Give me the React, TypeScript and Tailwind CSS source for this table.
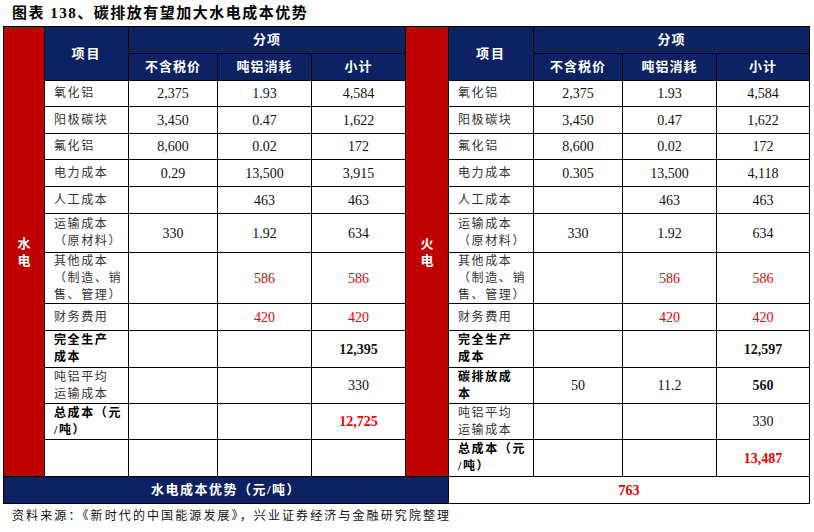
const NAVY = "bg-[#0c2262]";
const RED = "bg-[#c00000]";

type Row = {
  label: string[];
  bold?: boolean;
  a?: string;
  b?: string;
  c?: string;
  red?: boolean;
  boldNum?: boolean;
};

const shared: Row[] = [
  { label: ["氧化铝"], a: "2,375", b: "1.93", c: "4,584" },
  { label: ["阳极碳块"], a: "3,450", b: "0.47", c: "1,622" },
  { label: ["氟化铝"], a: "8,600", b: "0.02", c: "172" },
];

const water: Row[] = [
  ...shared,
  { label: ["电力成本"], a: "0.29", b: "13,500", c: "3,915" },
  { label: ["人工成本"], b: "463", c: "463" },
  { label: ["运输成本", "（原材料）"], a: "330", b: "1.92", c: "634" },
  { label: ["其他成本", "（制造、销", "售、管理）"], b: "586", c: "586", red: true },
  { label: ["财务费用"], b: "420", c: "420", red: true },
  { label: ["完全生产", "成本"], bold: true, c: "12,395", boldNum: true },
  { label: ["吨铝平均", "运输成本"], c: "330" },
  { label: ["总成本（元", "/吨）"], bold: true, c: "12,725", boldNum: true, red: true },
  { label: [] },
];

const fire: Row[] = [
  ...shared,
  { label: ["电力成本"], a: "0.305", b: "13,500", c: "4,118" },
  { label: ["人工成本"], b: "463", c: "463" },
  { label: ["运输成本", "（原材料）"], a: "330", b: "1.92", c: "634" },
  { label: ["其他成本", "（制造、销", "售、管理）"], b: "586", c: "586", red: true },
  { label: ["财务费用"], b: "420", c: "420", red: true },
  { label: ["完全生产", "成本"], bold: true, c: "12,597", boldNum: true },
  { label: ["碳排放成", "本"], bold: true, a: "50", b: "11.2", c: "560", boldNum: true },
  { label: ["吨铝平均", "运输成本"], c: "330" },
  { label: ["总成本（元", "/吨）"], bold: true, c: "13,487", boldNum: true, red: true },
];

const labelCols = ["col-start-2", "col-start-7"];
const aCols = ["col-start-3", "col-start-8"];
const bCols = ["col-start-4", "col-start-9"];
const cCols = ["col-start-5", "col-start-10"];
const rowStarts = [
  "row-start-3",
  "row-start-4",
  "row-start-5",
  "row-start-6",
  "row-start-7",
  "row-start-8",
  "row-start-9",
  "row-start-10",
  "row-start-11",
  "row-start-12",
  "row-start-13",
  "row-start-14",
];

function Num({ v, r, red, bold }: { v?: string; r: string; red?: boolean; bold?: boolean }) {
  return (
    <div
      className={`${r} bg-white flex items-center justify-center text-[14px] ${
        red ? "text-[#f00000]" : "text-[#111]"
      } ${bold ? "font-bold" : ""}`}
    >
      {v}
    </div>
  );
}

function Table({ rows, side, name }: { rows: Row[]; side: number; name: string[] }) {
  const redCol = side === 0 ? "col-start-1" : "col-start-6";
  return (
    <>
      <div
        className={`${redCol} row-start-1 row-span-14 ${RED} flex flex-col items-center justify-center text-white font-bold text-[13px] leading-[17px]`}
      >
        {name.map((n) => (
          <span key={n}>{n}</span>
        ))}
      </div>
      <div
        className={`${labelCols[side]} row-start-1 row-span-2 ${NAVY} flex items-center justify-center text-white font-bold text-[13px] tracking-[2px]`}
      >
        项目
      </div>
      <div
        className={`${aCols[side]} row-start-1 col-span-3 ${NAVY} flex items-center justify-center text-white font-bold text-[13px] tracking-[1px]`}
      >
        分项
      </div>
      {["不含税价", "吨铝消耗", "小计"].map((h, i) => (
        <div
          key={h}
          className={`${[aCols, bCols, cCols][i][side]} row-start-2 ${NAVY} flex items-center justify-center text-white font-bold text-[13px] tracking-[1px]`}
        >
          {h}
        </div>
      ))}
      {rows.map((row, i) => (
        <div key={i} className="contents">
          <div
            className={`${labelCols[side]} ${rowStarts[i]} bg-white flex flex-col justify-center pl-[9px] text-[12px] leading-[17px] tracking-[1.6px] ${
              row.bold ? "font-bold text-black" : "text-[#333]"
            }`}
          >
            {row.label.map((l) => (
              <span key={l} className="whitespace-nowrap">
                {l}
              </span>
            ))}
          </div>
          <Num v={row.a} r={`${aCols[side]} ${rowStarts[i]}`} />
          <Num v={row.b} r={`${bCols[side]} ${rowStarts[i]}`} red={row.red} />
          <Num v={row.c} r={`${cCols[side]} ${rowStarts[i]}`} red={row.red} bold={row.boldNum} />
        </div>
      ))}
    </>
  );
}

export default function App() {
  return (
    <div
      className="w-[814px] h-[532px] bg-white overflow-hidden"
      style={{ fontFamily: '"Liberation Serif", "Noto Sans CJK SC", serif' }}
    >
      <div className="h-[26px] pl-[12px] pt-[3px] text-[15px] leading-[20px] font-bold tracking-[1.5px] text-black">
        图表 138、碳排放有望加大水电成本优势
      </div>
      <div className="ml-[3px] w-[807px] grid gap-px p-px bg-black grid-cols-[40px_83px_88px_93px_93px_42px_84px_88px_93px_92px] grid-rows-[26px_26px_25px_26px_25px_26px_26px_38px_50px_26px_36px_35px_35px_36px_26px]">
        <Table rows={water} side={0} name={["水", "电"]} />
        <Table rows={fire} side={1} name={["火", "电"]} />
        <div
          className={`col-start-1 col-span-6 row-start-15 ${NAVY} flex items-center justify-center text-white font-bold text-[13px] tracking-[1.5px]`}
        >
          水电成本优势（元/吨）
        </div>
        <div className="col-start-7 col-span-4 row-start-15 bg-white flex items-center justify-center text-[14px] font-bold text-[#e00000]">
          763
        </div>
      </div>
      <div className="pl-[12px] mt-[4px] text-[12px] leading-[16px] tracking-[2.1px] text-[#111]">
        资料来源：《新时代的中国能源发展》，兴业证券经济与金融研究院整理
      </div>
    </div>
  );
}
